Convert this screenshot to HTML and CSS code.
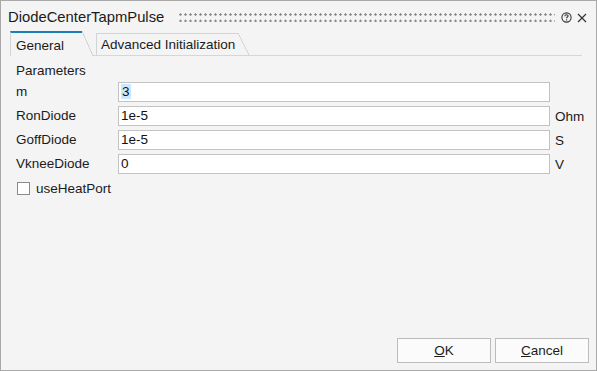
FILE: index.html
```html
<!DOCTYPE html>
<html>
<head>
<meta charset="utf-8">
<link rel="stylesheet" href="styles.css">
</head>
<body>
<div class="window">
  <div class="titlebar">
    <span class="title">DiodeCenterTapmPulse</span>
    <span class="grip"></span>
    <svg class="help" width="11" height="11" viewBox="0 0 11 11"><circle cx="5.5" cy="5.5" r="4.6" fill="none" stroke="#333" stroke-width="1.1"/><path d="M3.9 4.3 C3.9 3.3 4.6 2.8 5.5 2.8 C6.4 2.8 7.1 3.3 7.1 4.1 C7.1 5 5.6 5.1 5.6 6.3" fill="none" stroke="#333" stroke-width="1.1"/><circle cx="5.6" cy="7.9" r="0.7" fill="#333"/></svg>
    <svg class="close" width="10" height="10" viewBox="0 0 10 10"><path d="M1 1 L9 9 M9 1 L1 9" stroke="#333" stroke-width="1.2"/></svg>
  </div>
  <div class="tabs">
    <div class="tab tab-active"><span class="tab-label">General</span><span class="slant"></span></div>
    <div class="tab-gap"></div>
    <div class="tab tab-inactive"><span class="tab-label">Advanced Initialization</span><span class="slant"></span></div>
    <div class="tab-fill"></div>
  </div>
  <div class="pane">
    <div class="section">Parameters</div>
    <div class="grid">
      <label class="lbl">m</label><div class="input"><span class="sel">3</span></div><span class="unit"></span>
      <label class="lbl">RonDiode</label><div class="input">1e-5</div><span class="unit">Ohm</span>
      <label class="lbl">GoffDiode</label><div class="input">1e-5</div><span class="unit">S</span>
      <label class="lbl">VkneeDiode</label><div class="input">0</div><span class="unit">V</span>
    </div>
    <div class="check-row"><span class="checkbox"></span><span>useHeatPort</span></div>
  </div>
  <div class="footer">
    <button class="btn"><u>O</u>K</button>
    <button class="btn"><u>C</u>ancel</button>
  </div>
</div>
</body>
</html>
```
FILE: styles.css
```css
html, body {
  margin: 0;
  padding: 0;
  background: #f4f4f4;
}
body {
  font-family: "Liberation Sans", Arial, sans-serif;
  font-size: 13.5px;
  color: #1b1b1b;
}
.window {
  width: 597px;
  height: 371px;
  box-sizing: border-box;
  border: 1px solid #a9a9a9;
  background: #f4f4f4;
  display: flex;
  flex-direction: column;
}
.titlebar {
  height: 30px;
  display: flex;
  align-items: center;
  padding: 2px 0 0 7px;
  box-sizing: border-box;
}
.title {
  font-size: 14.8px;
  color: #1a1a1a;
  white-space: nowrap;
}
.grip {
  flex: 1;
  height: 9px;
  margin: 1px 6px 0 15px;
  background-image: radial-gradient(circle at 1.5px 1.5px, #8a8a8a 1px, transparent 1.4px);
  background-size: 5px 6.5px;
}
.help {
  margin-right: 5px;
  margin-top: 1px;
}
.close {
  margin-right: 9px;
  margin-top: 1px;
}
.tabs {
  height: 25px;
  display: flex;
  align-items: flex-end;
}
.tab {
  display: flex;
  align-items: stretch;
}
.tab-active {
  height: 25px;
  margin-left: 9px;
}
.tab-active .tab-label {
  border-top: 2px solid #1b7fb3;
  border-left: 1px solid #d4d4d4;
  padding: 1px 9px 0 5px;
  width: 57px;
  display: flex;
  align-items: center;
}
.tab-inactive {
  height: 23px;
  border-bottom: 1px solid #d6d6d6;
  box-sizing: border-box;
}
.tab-inactive .tab-label {
  border-top: 1px solid #d4d4d4;
  border-left: 1px solid #d4d4d4;
  padding: 0 3px 0 4px;
  display: flex;
  align-items: center;
}
.slant {
  width: 11px;
  background: linear-gradient(to top right, transparent calc(50% - 0.7px), #c8c8c8 50%, transparent calc(50% + 0.7px));
}
.tab-gap {
  width: 3px;
  height: 1px;
  border-bottom: 1px solid #d6d6d6;
}
.tab-fill {
  flex: 1;
  height: 0;
  border-bottom: 1px solid #d6d6d6;
  margin-right: 14px;
}
.pane {
  flex: 1;
  padding: 5px 0 0 15px;
}
.section {
  line-height: 20px;
  margin-bottom: 1px;
}
.grid {
  display: grid;
  grid-template-columns: 102px 432px auto;
  grid-auto-rows: 20px;
  row-gap: 4px;
  align-items: center;
}
.lbl {
  line-height: 20px;
}
.input {
  height: 20px;
  box-sizing: border-box;
  border: 1px solid #c3c3c3;
  background: #ffffff;
  padding: 0 0 0 2px;
  line-height: 18px;
  color: #111;
}
.sel {
  background: #cce8ff;
  padding: 0 1px;
}
.unit {
  padding-left: 5px;
}
.check-row {
  display: flex;
  align-items: center;
  gap: 6px;
  height: 20px;
  margin-top: 4px;
  margin-left: 1px;
}
.checkbox {
  width: 11px;
  height: 11px;
  border: 1px solid #8a8a8a;
  background: #fff;
}
.footer {
  display: flex;
  justify-content: flex-end;
  gap: 4px;
  padding: 0 7px 7px 0;
}
.btn {
  width: 94px;
  height: 25px;
  border: 1px solid #bcbcbc;
  background: #fbfbfb;
  font-family: "Liberation Sans", Arial, sans-serif;
  font-size: 13.5px;
  color: #1b1b1b;
  padding: 0;
}
```
